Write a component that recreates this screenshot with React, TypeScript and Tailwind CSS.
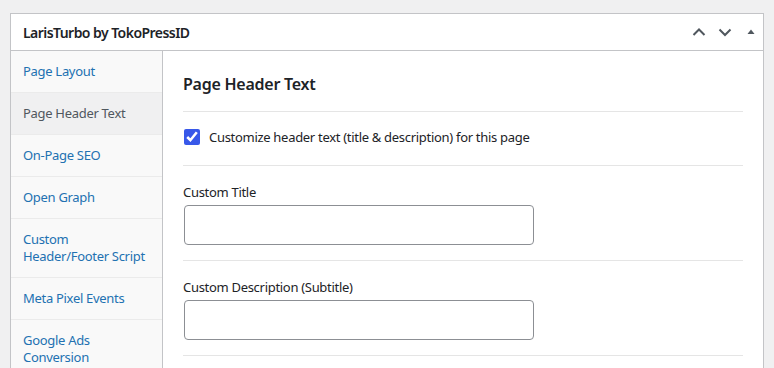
import React, { useState } from 'react';

const TABS = [
  'Page Layout',
  'Page Header Text',
  'On-Page SEO',
  'Open Graph',
  'Custom Header/Footer Script',
  'Meta Pixel Events',
  'Google Ads Conversion',
];

const ChevronUp = () => (
  <svg width="16" height="16" viewBox="0 0 16 16" fill="none" stroke="#50575e" strokeWidth="2">
    <path d="M2.5 11 L8 5.5 L13.5 11" />
  </svg>
);

const ChevronDown = () => (
  <svg width="16" height="16" viewBox="0 0 16 16" fill="none" stroke="#50575e" strokeWidth="2">
    <path d="M2.5 5.5 L8 11 L13.5 5.5" />
  </svg>
);

export default function App() {
  const [active, setActive] = useState('Page Header Text');
  const [checked, setChecked] = useState(true);

  return (
    <div className="min-h-[368px] bg-[#f0f0f1] pt-[13px] pl-[10px] pr-[10px] font-['Noto_Sans',sans-serif] text-[13px] tracking-[-0.3px] text-[#1d2327]">
      <div className="border border-[#c3c4c7] bg-white">
        {/* header */}
        <div className="flex h-[37px] items-center justify-between border-b border-[#c3c4c7] pl-[12px] pr-[4px]">
          <h2 className="text-[14px] font-semibold tracking-[-0.55px] text-[#1d2327]">LarisTurbo by TokoPressID</h2>
          <div className="flex items-center gap-[10px]">
            <ChevronUp />
            <ChevronDown />
            <svg width="16" height="16" viewBox="0 0 16 16">
              <path d="M4.5 10 L8 5.5 L11.5 10 Z" fill="#50575e" />
            </svg>
          </div>
        </div>

        <div className="flex">
          {/* sidebar */}
          <ul className="w-[152px] shrink-0 border-r border-[#c3c4c7] bg-[#f9f9f9]">
            {TABS.map(t => (
              <li
                key={t}
                onClick={() => setActive(t)}
                className={
                  'cursor-pointer border-b border-[#ebebeb] px-[12px] py-[12px] leading-[17px] ' +
                  (active === t ? 'bg-[#f0f0f1] text-[#50575e]' : 'text-[#2271b1]')
                }
              >
                {t}
              </li>
            ))}
          </ul>

          {/* content */}
          <div className="flex-1 px-[20px] pt-[22px]">
            <h3 className="border-b border-[#e5e5e5] pb-[16px] text-[16px] font-semibold leading-[22px] tracking-[-0.25px] text-[#1d2327]">
              Page Header Text
            </h3>

            <label className="flex items-center gap-[9px] border-b border-[#e5e5e5] pt-[15px] pb-[18px] pl-[1px]">
              <input
                type="checkbox"
                checked={checked}
                onChange={e => setChecked(e.target.checked)}
                className="h-[16px] w-[16px] accent-[#3858e9]"
              />
              <span className="leading-[20px]">Customize header text (title &amp; description) for this page</span>
            </label>

            <div className="border-b border-[#e5e5e5] pt-[16px] pb-[15px]">
              <div className="mb-[3px] leading-[20px]">Custom Title</div>
              <input
                type="text"
                className="ml-[1px] block h-[40px] w-[350px] rounded-[4px] border border-[#8c8f94] bg-white px-[8px]"
              />
            </div>

            <div className="border-b border-[#e5e5e5] pt-[16px] pb-[15px]">
              <div className="mb-[3px] leading-[20px]">Custom Description (Subtitle)</div>
              <input
                type="text"
                className="ml-[1px] block h-[40px] w-[350px] rounded-[4px] border border-[#8c8f94] bg-white px-[8px]"
              />
            </div>
          </div>
        </div>
      </div>
    </div>
  );
}
